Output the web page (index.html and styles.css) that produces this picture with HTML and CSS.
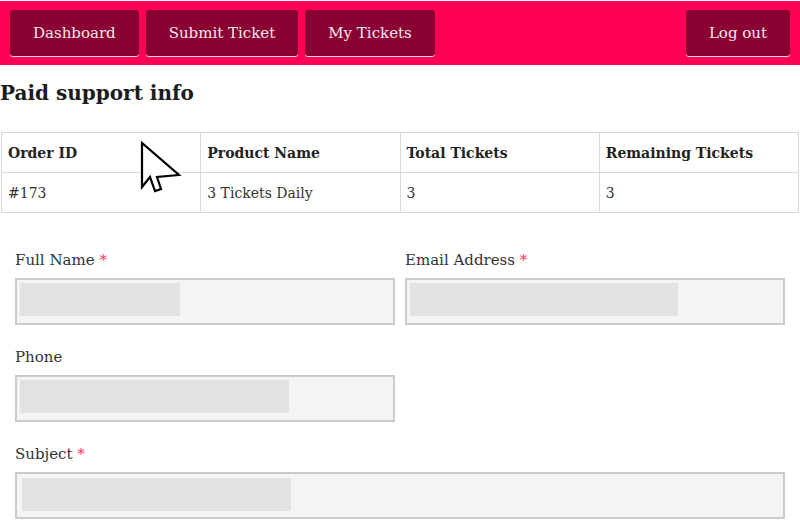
FILE: index.html
```html
<!DOCTYPE html>
<html lang="en">
<head>
  <meta charset="UTF-8">
  <title>Paid support info</title>
  <link rel="stylesheet" href="styles.css">
</head>
<body>

  <nav class="topbar">
    <a class="nav-btn" href="#">Dashboard</a>
    <a class="nav-btn" href="#">Submit Ticket</a>
    <a class="nav-btn" href="#">My Tickets</a>
    <a class="nav-btn logout" href="#">Log out</a>
  </nav>

  <h2 class="page-title">Paid support info</h2>

  <div class="table-wrap">
    <table class="orders">
      <thead>
        <tr>
          <th>Order ID</th>
          <th>Product Name</th>
          <th>Total Tickets</th>
          <th>Remaining Tickets</th>
        </tr>
      </thead>
      <tbody>
        <tr>
          <td>#173</td>
          <td>3 Tickets Daily</td>
          <td>3</td>
          <td>3</td>
        </tr>
      </tbody>
    </table>

    <!-- mouse pointer from the capture -->
    <svg class="cursor" width="44" height="56" viewBox="0 0 44 56">
      <path d="M2 2 L2 46 L10 36 L15 50 L21 48 L17 36 L39 34 Z" fill="#fff" stroke="#000" stroke-width="2.2" stroke-linejoin="miter"/>
    </svg>
  </div>

  <form class="ticket-form">
    <div class="row two">
      <div class="field">
        <label>Full Name <span class="req">*</span></label>
        <div class="input"><span class="skel" style="width:160px"></span></div>
      </div>
      <div class="field">
        <label>Email Address <span class="req">*</span></label>
        <div class="input"><span class="skel" style="width:268px"></span></div>
      </div>
    </div>

    <div class="row two">
      <div class="field">
        <label>Phone</label>
        <div class="input"><span class="skel" style="width:269px"></span></div>
      </div>
    </div>

    <div class="row">
      <div class="field">
        <label>Subject <span class="req">*</span></label>
        <div class="input wide"><span class="skel" style="width:269px"></span></div>
      </div>
    </div>
  </form>

</body>
</html>
```

FILE: styles.css
```css
body {
  margin: 0;
  font-family: "DejaVu Serif", "Liberation Serif", serif;
  color: #222;
  background: #fff;
}

.topbar {
  display: flex;
  gap: 7px;
  margin-top: 1px;
  padding: 9px 10px;
  background: #ff0055;
}

.nav-btn {
  display: block;
  padding: 0 23px;
  line-height: 46px;
  font-size: 15px;
  color: #f7e8ee;
  text-decoration: none;
  background: #8a0032;
  border-radius: 3px;
  box-shadow: 0 1px 0 #ffd6e2;
}

.logout {
  margin-left: auto;
}

.page-title {
  margin: 13px 0 0;
  font-size: 20px;
  font-weight: bold;
  color: #1c1c1c;
  line-height: 30px;
}

.table-wrap {
  position: relative;
  margin: 24px 1px 0;
}

.orders {
  width: 100%;
  border-collapse: collapse;
  table-layout: fixed;
  font-size: 14px;
}

.orders th,
.orders td {
  border: 1px solid #d9d9d9;
  height: 39px;
  padding: 0 6px;
  text-align: left;
}

.orders th {
  font-weight: bold;
  color: #222;
}

.orders td {
  color: #333;
}

.cursor {
  position: absolute;
  left: 139px;
  top: 9px;
}

.ticket-form {
  padding: 37px 15px 0;
}

.row {
  margin-bottom: 22px;
}

.row.two {
  display: grid;
  grid-template-columns: 1fr 1fr;
  gap: 10px;
}

.field label {
  display: block;
  font-size: 15px;
  color: #333;
  line-height: 20px;
  margin-bottom: 8px;
}

.req {
  color: #ff3b5c;
}

.input {
  box-sizing: border-box;
  height: 47px;
  padding: 3px 3px;
  background: #f4f4f4;
  border: 2px solid #cbcbcb;
}

.input.wide {
  padding-left: 5px;
  padding-top: 4px;
}

.skel {
  display: block;
  height: 33px;
  background: #e1e2e4;
}
```
